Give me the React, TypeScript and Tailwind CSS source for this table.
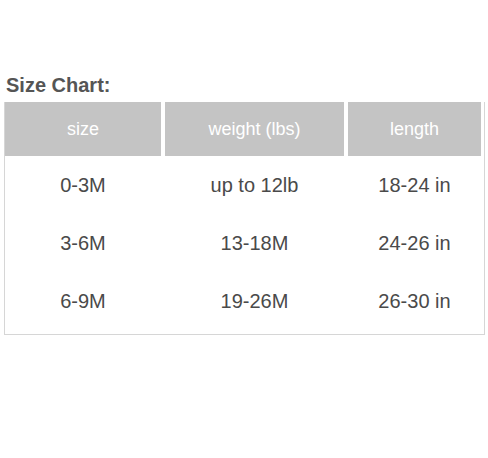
const rows = [
  { size: "0-3M", weight: "up to 12lb", length: "18-24 in" },
  { size: "3-6M", weight: "13-18M", length: "24-26 in" },
  { size: "6-9M", weight: "19-26M", length: "26-30 in" },
];

const cols = "grid grid-cols-[156px_179px_133px] gap-x-[4px]";

export default function App() {
  return (
    <div className="w-[488px] h-[458px] bg-white pt-[74px] font-['Liberation_Sans',Arial,sans-serif]">
      <h2 className="pl-[6px] text-[20px] leading-[23px] font-bold text-[#555555]">Size Chart:</h2>

      <div className="mt-[5px] ml-[4px] w-[481px] border-x border-b border-[#d6d6d6] pb-[4px]">
        {/* header */}
        <div className={`${cols} h-[54px]`}>
          {["size", "weight (lbs)", "length"].map((h) => (
            <div key={h} className="flex items-center justify-center bg-[#c4c4c4] text-[18px] text-white">
              {h}
            </div>
          ))}
        </div>

        {/* body */}
        {rows.map((r) => (
          <div key={r.size} className={`${cols} h-[58px] items-center text-[20px] text-[#4a4a4a]`}>
            <div className="text-center">{r.size}</div>
            <div className="text-center">{r.weight}</div>
            <div className="text-center">{r.length}</div>
          </div>
        ))}
      </div>
    </div>
  );
}
